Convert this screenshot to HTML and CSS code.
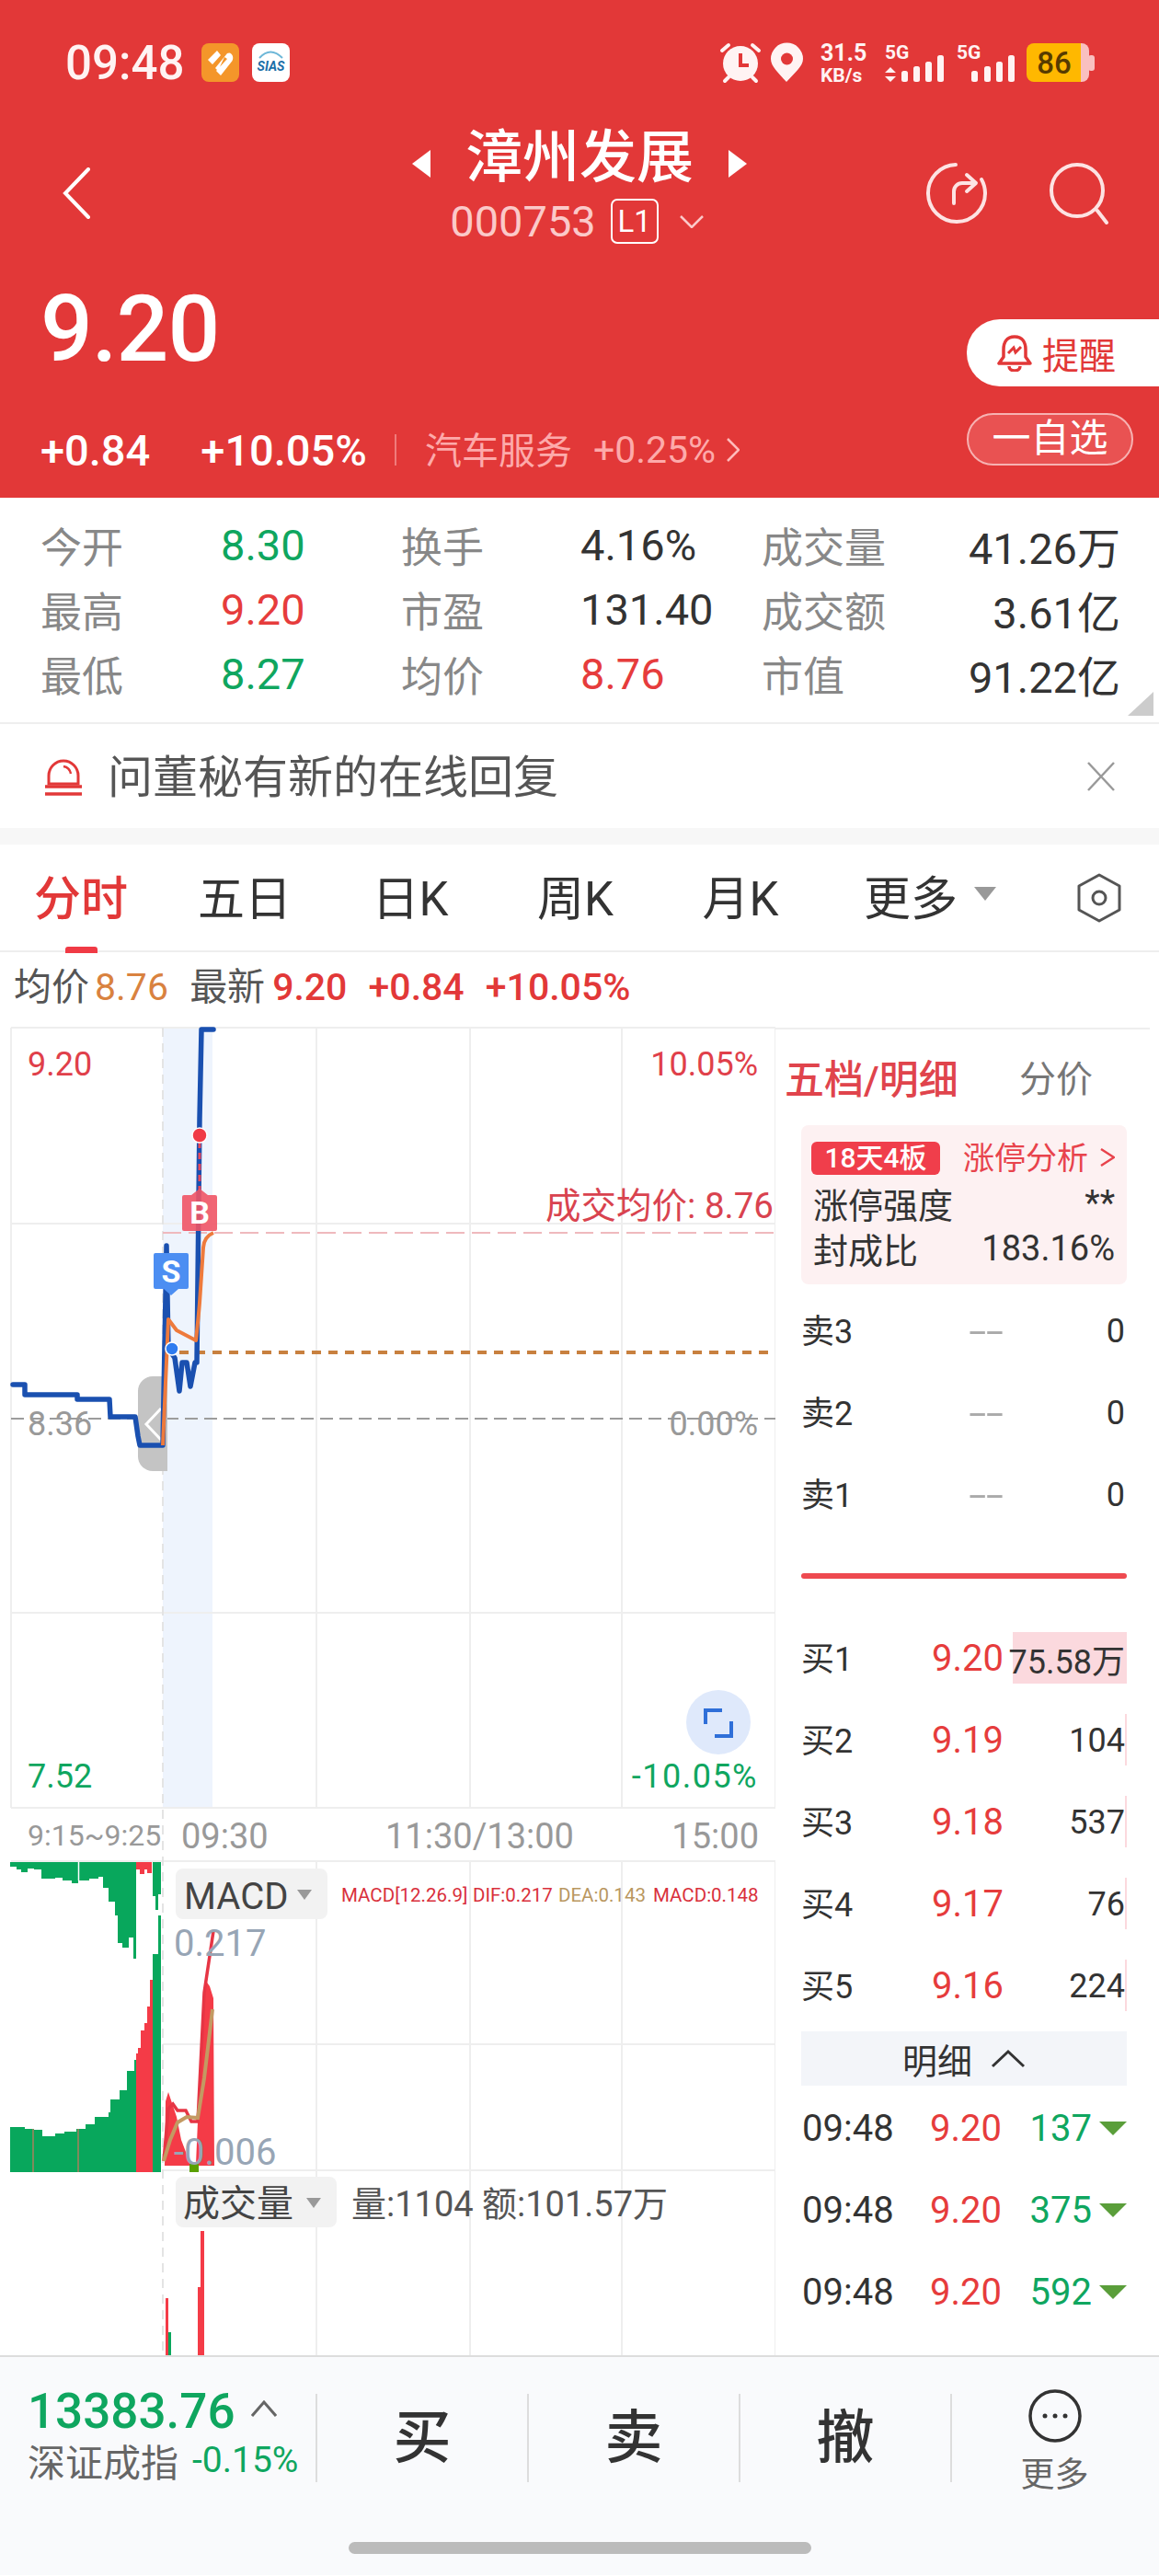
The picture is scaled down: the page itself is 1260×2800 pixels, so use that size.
FILE: index.html
```html
<!DOCTYPE html>
<html lang="zh-CN">
<head>
    <meta charset="UTF-8">
    <meta name="viewport" content="width=device-width, initial-scale=1.0">
    <title>漳州发展</title>
    <link rel="stylesheet" href="styles.css">
</head>
<body>
<div class="page">

    <!-- 红色头部 -->
    <header class="head">
        <div class="status-bar">
            <div class="status-left">
                <span class="clock">09:48</span>
                <svg class="app-tile" viewBox="0 0 41 42"><rect width="41" height="42" rx="8" fill="#f4962a"/><path d="M7 18 L17 8 L21 13 L12 23 Z M15 27 L28 11 Q32 9 34 14 Q35 18 32 21 L21 35 L16 30 L28 17 L25 15 L18 30 Z" fill="#fff"/></svg>
                <svg class="app-tile" viewBox="0 0 41 42"><rect width="41" height="42" rx="8" fill="#fff"/><path d="M8 16 Q20 3 33 16" fill="none" stroke="#6db7d8" stroke-width="2"/><text class="sias" x="20.5" y="30" text-anchor="middle">SIAS</text></svg>
            </div>
            <svg class="status-right" viewBox="783 47 407 43">
                <circle cx="805" cy="69" r="19" fill="#fff3f3"/>
                <path d="M805 58 V71 H814" fill="none" stroke="#e23838" stroke-width="4"/>
                <path d="M785 55 L792 49 M825 55 L818 49 M788 88 L792 84 M822 88 L818 84" stroke="#fff3f3" stroke-width="4" stroke-linecap="round"/>
                <path d="M855 89 C846 79 838 72 838 64 A17.5 17.5 0 0 1 873 64 C873 72 864 79 855 89 Z" fill="#fff3f3"/>
                <circle cx="855.500" cy="64" r="6.500" fill="#e23838"/>
                <text class="net-speed" x="892" y="66">31.5</text>
                <text class="net-unit" x="892" y="89">KB/s</text>
                <text class="net-type" x="962" y="64">5G</text>
                <text class="net-type" x="1040" y="64">5G</text>
                <path d="M968 73 L974 79 H962 Z M968 89 L974 83 H962 Z" fill="#fff3f3"/>
                <g fill="#fff3f3">
                    <rect x="980" y="77" width="7" height="12" rx="2.500"/>
                    <rect x="993" y="72" width="7" height="17" rx="2.500"/>
                    <rect x="1006" y="67" width="7" height="22" rx="2.500"/>
                    <rect x="1019" y="60" width="7" height="29" rx="2.500"/>
                    <rect x="1056" y="77" width="7" height="12" rx="2.500"/>
                    <rect x="1070" y="72" width="7" height="17" rx="2.500"/>
                    <rect x="1083" y="67" width="7" height="22" rx="2.500"/>
                    <rect x="1096" y="60" width="7" height="29" rx="2.500"/>
                </g>
                <rect x="1150" y="47" width="34" height="42" rx="8" fill="#f9c0c0"/>
                <rect x="1183" y="60" width="7" height="17" rx="3" fill="#f9c0c0"/>
                <path d="M1124 47 H1175 V89 H1124 A8 8 0 0 1 1116 81 V55 A8 8 0 0 1 1124 47 Z" fill="#ffb800"/>
                <text class="battery" x="1146" y="80" text-anchor="middle">86</text>
            </svg>
        </div>

        <div class="nav">
            <svg class="back-icon" viewBox="0 0 30 56"><path d="M28 2 L3 28 L28 54" fill="none" stroke="#fff" stroke-width="4" stroke-linecap="round"/></svg>
            <div class="nav-title">
                <div class="name-row">
                    <span class="arrow arrow-left"></span>
                    <span class="stock-name">漳州发展</span>
                    <span class="arrow arrow-right"></span>
                </div>
                <div class="code-row">
                    <span class="stock-code">000753</span>
                    <span class="level-tag">L1</span>
                    <svg class="code-caret" viewBox="0 0 26 14"><path d="M1 1 L13 13 L25 1" fill="none" stroke="#fbc9c9" stroke-width="2.500"/></svg>
                </div>
            </div>
            <div class="nav-actions">
                <svg class="nav-icon" viewBox="0 0 68 68"><path d="M32 3 A31 31 0 1 0 64 34" fill="none" stroke="#fde3e3" stroke-width="4" stroke-linecap="round"/><path d="M64 34 A31 31 0 0 0 60 19" fill="none" stroke="#fde3e3" stroke-width="4" stroke-linecap="round"/><path d="M30 45 V32 A9 9 0 0 1 39 23 H52 M44 14 L54 23 L44 32" fill="none" stroke="#fde3e3" stroke-width="4" stroke-linecap="round" stroke-linejoin="round"/></svg>
                <svg class="nav-icon" viewBox="0 0 68 68"><circle cx="31" cy="31" r="28" fill="none" stroke="#fde3e3" stroke-width="4"/><path d="M53 53 L63 66" stroke="#fde3e3" stroke-width="4" stroke-linecap="round"/></svg>
            </div>
        </div>

        <div class="price-row">
            <div class="price-left">
                <div class="last-price">9.20</div>
                <div class="change-row">
                    <span class="chg">+0.84</span>
                    <span class="chg chg-pct">+10.05%</span>
                    <span class="chg-sep"></span>
                    <span class="sector">汽车服务</span>
                    <span class="sector-chg">+0.25%</span>
                    <svg class="sector-arrow" viewBox="0 0 14 26"><path d="M1 1 L13 13 L1 25" fill="none" stroke="#fbb" stroke-width="2.500"/></svg>
                </div>
            </div>
            <div class="price-right">
                <div class="remind-btn">
                    <svg class="bell" viewBox="0 0 38 40"><path d="M19 2 C10 2 7 9 7 16 V24 L2 31 H36 L31 24 V16 C31 9 28 2 19 2 Z" fill="none" stroke="#e23838" stroke-width="3.500" stroke-linejoin="round"/><path d="M13 34 A6 5 0 0 0 25 34" fill="none" stroke="#e23838" stroke-width="3.500"/><path d="M12 20 L18 14 L20 19 L26 13" fill="none" stroke="#e23838" stroke-width="3"/></svg>
                    <span>提醒</span>
                </div>
                <div class="watch-btn">一自选</div>
            </div>
        </div>
    </header>

    <!-- 行情数据 -->
    <section class="stats">
        <span class="stat-label">今开</span><span class="stat-val green">8.30</span>
        <span class="stat-label">换手</span><span class="stat-val">4.16%</span>
        <span class="stat-label">成交量</span><span class="stat-val right">41.26万</span>
        <span class="stat-label">最高</span><span class="stat-val red">9.20</span>
        <span class="stat-label">市盈</span><span class="stat-val">131.40</span>
        <span class="stat-label">成交额</span><span class="stat-val right">3.61亿</span>
        <span class="stat-label">最低</span><span class="stat-val green">8.27</span>
        <span class="stat-label">均价</span><span class="stat-val red">8.76</span>
        <span class="stat-label">市值</span><span class="stat-val right">91.22亿</span>
        <span class="corner-mark"></span>
    </section>

    <section class="notice">
        <svg class="notice-icon" viewBox="0 0 42 44"><path d="M5 30 V21 A16 16 0 0 1 37 21 V30 Z" fill="none" stroke="#e23838" stroke-width="3"/><path d="M21 11 A10 10 0 0 1 29 19" fill="none" stroke="#e23838" stroke-width="2.500"/><path d="M1 33 H41 M1 41 H41" stroke="#e23838" stroke-width="3.500"/></svg>
        <span class="notice-text">问董秘有新的在线回复</span>
        <svg class="notice-close" viewBox="0 0 30 32"><path d="M1 1 L29 31 M29 1 L1 31" stroke="#999" stroke-width="2.500"/></svg>
    </section>

    <div class="band"></div>

    <nav class="tabs">
        <div class="tab-list">
            <span class="tab active">分时</span>
            <span class="tab">五日</span>
            <span class="tab">日K</span>
            <span class="tab">周K</span>
            <span class="tab">月K</span>
            <span class="tab tab-more">更多<i class="tab-caret"></i></span>
        </div>
        <svg class="hex-icon" viewBox="0 0 50 54"><path d="M25 2 L47 14 V40 L25 52 L3 40 V14 Z" fill="none" stroke="#555" stroke-width="3" stroke-linejoin="round"/><circle cx="25" cy="27" r="7" fill="none" stroke="#555" stroke-width="3"/></svg>
    </nav>

    <div class="quote-line">
        <span class="q-label">均价</span><span class="q-avg">8.76</span>
        <span class="q-label q-gap">最新</span><span class="q-red">9.20</span>
        <span class="q-red q-gap">+0.84</span>
        <span class="q-red q-gap">+10.05%</span>
    </div>

    <div class="trade">
        <!-- 分时图，坐标直接用整页坐标 -->
        <div class="chart">
            <svg class="chart-svg" viewBox="0 1100 843 1461">
                <rect x="177" y="1118" width="54" height="848" fill="#eef4fd"/>
                <g stroke="#eee" stroke-width="2" fill="none">
                    <path d="M12 1118 H843 M12 1331 H843 M12 1754 H843 M12 1966 H843"/>
                    <path d="M12 1118 V1966 M344 1118 V1966 M511 1118 V1966 M676 1118 V1966 M843 1118 V1966"/>
                    <path d="M12 2024 H843 M177 2223 H843 M177 2360 H843"/>
                    <path d="M344 2024 V2561 M511 2024 V2561 M676 2024 V2561 M843 2024 V2561"/>
                </g>
                <path d="M177 1118 V2561" stroke="#e4e4e4" stroke-width="2" stroke-dasharray="10 7"/>
                <path d="M12 1543 H843" stroke="#9c9c9c" stroke-width="2" stroke-dasharray="14 7"/>
                <path d="M177 1341 H843" stroke="#efb9bd" stroke-width="2" stroke-dasharray="20 8"/>
                <path d="M177 1471 H843" stroke="#c8803f" stroke-width="4" stroke-dasharray="10 8"/>

                <path class="handle" d="M182 1497 H166 A16 16 0 0 0 150 1513 V1584 A16 16 0 0 0 166 1600 H182 Z"/>
                <path d="M175 1532 L159 1549 L175 1566" fill="none" stroke="#fff" stroke-width="3"/>

                <path class="price-line" d="M14 1506 H27 V1517 H84 V1522 H119 L120 1541 H147 L150 1562 L152 1572 H177 L181 1355 L183 1467 L190 1477 L195 1513 L198 1482 H203 L207 1508 L212 1482 H214 L217 1217 L219 1120 H232"/>
                <path class="avg-line" d="M177 1572 L183 1435 L192 1447 L213 1458 Q216 1430 217 1417 L221 1357 Q222 1345 232 1341"/>
                <path d="M217 1242 V1295" stroke="#e8485a" stroke-width="3" stroke-dasharray="7 5"/>
                <circle cx="217" cy="1235" r="8" fill="#f03a45" stroke="#fff" stroke-width="1.500"/>
                <circle cx="187" cy="1467" r="7" fill="#2f7cf0" stroke="#fff" stroke-width="1.500"/>

                <path d="M198 1302 A2 2 0 0 1 200 1300 H208 L217 1293 L226 1300 H234 A2 2 0 0 1 236 1302 V1337 A2 2 0 0 1 234 1339 H200 A2 2 0 0 1 198 1337 Z" fill="#ef5465" fill-opacity=".9"/>
                <text class="mark" x="217" y="1331" text-anchor="middle">B</text>
                <path d="M167 1365 A2 2 0 0 1 169 1363 H203 A2 2 0 0 1 205 1365 V1400 A2 2 0 0 1 203 1402 H194 L186 1409 L178 1402 H169 A2 2 0 0 1 167 1400 Z" fill="#4c8ef2"/>
                <text class="mark" x="186" y="1395" text-anchor="middle">S</text>

                <circle cx="781" cy="1873" r="35" fill="#dfe9fb"/>
                <path d="M767 1875 V1860 H785 M795 1872 V1888 H777" fill="none" stroke="#2f6fd8" stroke-width="4"/>

                <text class="lbl red" x="30" y="1170">9.20</text>
                <text class="lbl red" x="824" y="1170" text-anchor="end">10.05%</text>
                <text class="lbl deal" x="841" y="1325" text-anchor="end">成交均价: 8.76</text>
                <text class="lbl gray" x="30" y="1561">8.36</text>
                <text class="lbl gray" x="824" y="1561" text-anchor="end">0.00%</text>
                <text class="lbl green" x="30" y="1944">7.52</text>
                <text class="lbl green wide" x="824" y="1944" text-anchor="end">-10.05%</text>

                <text class="axis-small" x="30" y="2007">9:15~9:25</text>
                <text class="lbl time" x="197" y="2010">09:30</text>
                <text class="lbl time" x="419" y="2010">11:30/13:00</text>
                <text class="lbl time" x="825" y="2010" text-anchor="end">15:00</text>

                <!-- MACD 柱 -->
                <path fill="#08a75c" d="M11 2025 V2030 H18 V2033 H23 V2036 H30 V2032 H37 V2033 H45 V2043 H60 V2042 H68 V2045 H78 V2048 H85 V2045 H97 V2043 H107 V2041 H112 V2053 H118 V2068 H125 V2083 H128 V2113 H133 V2118 H140 V2107 H145 V2130 H148 V2025 Z"/>
                <path fill="#08a75c" d="M166 2025 V2062 H169 V2077 H172 V2060 H175 V2025 Z"/>
                <path fill="#f43b47" d="M148 2025 V2033 H152 V2038 H157 V2033 H160 V2037 H165 V2025 Z"/>
                <path fill="#08a75c" d="M11 2362 V2313 H27 V2315 H35 V2316 H46 V2323 H60 V2320 H70 V2318 H83 V2315 H93 V2310 H103 V2302 H118 V2297 H120 V2283 H130 V2273 H138 V2252 H146 V2240 H148 V2362 Z"/>
                <path fill="#f43b47" d="M148 2362 V2233 H150 V2227 H153 V2208 H157 V2200 H160 V2182 H163 V2153 H166 V2362 Z"/>
                <path fill="#08a75c" d="M166 2362 V2125 H172 V2083 H175 V2362 Z"/>
                <path d="M36 2315 V2362 M85 2315 V2362" stroke="#7f8a5c" stroke-width="2"/>
                <path d="M85.500 2025 V2045" stroke="#fff" stroke-width="1.500"/>
                <path fill="#f43b47" d="M179 2355 L180 2285 L183 2275 L187 2287 L192 2302 L197 2327 L207 2353 H213 L215 2307 L220 2200 L223 2153 L228 2160 L232 2173 L233 2355 Z"/>
                <path d="M178 2350 L183 2293 L188 2288 L193 2295 L202 2295 L208 2307 L215 2307 L222 2167 L232 2100" fill="none" stroke="#e63544" stroke-width="3.500"/>
                <path d="M178 2350 L185 2327 L193 2308 L203 2302 L215 2303 L222 2260 L231 2185" fill="none" stroke="#c39a62" stroke-width="4"/>
                <rect x="206" y="2353" width="10" height="9" fill="#5aa000"/>

                <rect class="chip" x="191" y="2032" width="165" height="55" rx="8"/>
                <text class="chip-text" x="200" y="2076">MACD</text>
                <path class="chip-caret" d="M323 2055 H339 L331 2066 Z"/>
                <text class="axis-val" x="189" y="2127">0.217</text>
                <text class="axis-val" x="189" y="2354">-0.006</text>
                <text class="macd-t macd-red" x="371" y="2068">MACD[12.26.9]</text>
                <text class="macd-t macd-red" x="514" y="2068">DIF:0.217</text>
                <text class="macd-t macd-tan" x="607" y="2068">DEA:0.143</text>
                <text class="macd-t macd-red" x="710" y="2068">MACD:0.148</text>

                <rect class="chip" x="191" y="2367" width="175" height="55" rx="8"/>
                <text class="chip-text" x="199" y="2410">成交量</text>
                <path class="chip-caret" d="M333 2390 H349 L341 2401 Z"/>
                <text class="vol-text" x="382" y="2410">量:1104 额:101.57万</text>

                <!-- 成交量柱 -->
                <rect x="180" y="2499" width="3" height="62" fill="#f43b47"/>
                <rect x="183" y="2536" width="3" height="25" fill="#08a75c"/>
                <rect x="215" y="2487" width="3" height="74" fill="#f43b47"/>
                <rect x="218" y="2426" width="4" height="135" fill="#f43b47"/>
            </svg>
        </div>

        <!-- 五档 -->
        <aside class="book">
            <div class="book-tabs">
                <span class="book-tab-on">五档/明细</span>
                <span class="book-tab">分价</span>
            </div>
            <div class="limit-card">
                <div class="limit-head">
                    <span class="limit-badge">18天4板</span>
                    <span class="limit-link">涨停分析</span>
                    <svg class="limit-arrow" viewBox="0 0 16 22"><path d="M1 2 L15 11 L1 20" fill="none" stroke="#e8434c" stroke-width="2.500"/></svg>
                </div>
                <div class="limit-row"><span>涨停强度</span><span>**</span></div>
                <div class="limit-row"><span>封成比</span><span>183.16%</span></div>
            </div>

            <div class="sell-rows">
                <div class="level"><span class="lv-name">卖3</span><span class="lv-price"><b class="lv-none">--</b></span><span class="lv-vol">0</span></div>
                <div class="level"><span class="lv-name">卖2</span><span class="lv-price"><b class="lv-none">--</b></span><span class="lv-vol">0</span></div>
                <div class="level"><span class="lv-name">卖1</span><span class="lv-price"><b class="lv-none">--</b></span><span class="lv-vol">0</span></div>
            </div>
            <div class="book-line"></div>
            <div class="buy-rows">
                <div class="level"><span class="lv-name">买1</span><span class="lv-price red">9.20</span><span class="lv-vol">75.58万</span><i class="lv-bar" style="width:124px"></i></div>
                <div class="level"><span class="lv-name">买2</span><span class="lv-price red">9.19</span><span class="lv-vol">104</span><i class="lv-bar" style="width:2px"></i></div>
                <div class="level"><span class="lv-name">买3</span><span class="lv-price red">9.18</span><span class="lv-vol">537</span><i class="lv-bar" style="width:2px"></i></div>
                <div class="level"><span class="lv-name">买4</span><span class="lv-price red">9.17</span><span class="lv-vol">76</span><i class="lv-bar" style="width:2px"></i></div>
                <div class="level"><span class="lv-name">买5</span><span class="lv-price red">9.16</span><span class="lv-vol">224</span><i class="lv-bar" style="width:2px"></i></div>
            </div>
            <div class="detail-bar">
                <span>明细</span>
                <svg class="detail-caret" viewBox="0 0 38 22"><path d="M2 19 L19 3 L36 19" fill="none" stroke="#333" stroke-width="3"/></svg>
            </div>
            <div class="tick"><span>09:48</span><span class="tick-price red">9.20</span><span class="tick-vol green">137</span><i class="tick-down"></i></div>
            <div class="tick"><span>09:48</span><span class="tick-price red">9.20</span><span class="tick-vol green">375</span><i class="tick-down"></i></div>
            <div class="tick"><span>09:48</span><span class="tick-price red">9.20</span><span class="tick-vol green">592</span><i class="tick-down"></i></div>
        </aside>
    </div>

    <footer class="foot">
        <div class="foot-row">
            <div class="index-box">
                <div class="index-top">
                    <span class="index-num">13383.76</span>
                    <svg class="index-caret" viewBox="0 0 28 18"><path d="M1 17 L14 2 L27 17" fill="none" stroke="#666" stroke-width="3"/></svg>
                </div>
                <div class="index-sub"><span>深证成指</span><span class="index-pct">-0.15%</span></div>
            </div>
            <div class="trade-btn">买</div>
            <div class="trade-btn">卖</div>
            <div class="trade-btn">撤</div>
            <div class="more-btn">
                <svg class="more-icon" viewBox="0 0 58 58"><circle cx="29" cy="29" r="27" fill="none" stroke="#333" stroke-width="3.500"/><circle cx="18" cy="29" r="2.500" fill="#333"/><circle cx="29" cy="29" r="2.500" fill="#333"/><circle cx="40" cy="29" r="2.500" fill="#333"/></svg>
                <span>更多</span>
            </div>
        </div>
        <div class="home-bar"></div>
    </footer>
</div>
</body>
</html>
```

FILE: styles.css
```css
  * {
      box-sizing: border-box;
  }
  body {
      margin: 0;
      padding: 0;
      background-color: #fff;
      color: #333;
      font-family: Roboto, "Noto Sans CJK SC", sans-serif;
  }
  .page {
      width: 1260px;
      height: 2800px;
      overflow: hidden;
  }
  .red { color: #e63c3c; fill: #e63c3c; }
  .green { color: #0fa65f; fill: #0fa65f; }

  /* 头部 */
  .head {
      height: 541px;
      background-color: #e23838;
      color: #fff;
  }
  .status-bar {
      height: 136px;
      display: flex;
      justify-content: space-between;
      align-items: center;
      padding: 0 70px 0 71px;
  }
  .status-left {
      display: flex;
      align-items: center;
      gap: 14px;
  }
  .clock {
      font-size: 51px;
      font-weight: 500;
      color: #fff3f3;
      margin-right: 5px;
  }
  .app-tile {
      width: 41px;
      height: 42px;
  }
  .sias {
      font-size: 14px;
      font-weight: 700;
      font-style: italic;
      fill: #1b6ea8;
  }
  .status-right {
      width: 407px;
      height: 43px;
      overflow: visible;
  }
  .net-speed { font-size: 25px; font-weight: 700; fill: #fff3f3; }
  .net-unit { font-size: 21px; font-weight: 700; fill: #fff3f3; }
  .net-type { font-size: 21px; font-weight: 700; fill: #fff3f3; }
  .battery { font-size: 33px; font-weight: 500; fill: #573b00; }

  .nav {
      height: 136px;
      display: grid;
      grid-template-columns: 1fr auto 1fr;
      align-items: center;
      padding: 0 52px;
  }
  .back-icon {
      width: 30px;
      height: 56px;
      margin: 12px 0 0 16px;
  }
  .nav-title {
      display: flex;
      flex-direction: column;
      align-items: center;
  }
  .name-row {
      height: 72px;
      display: flex;
      align-items: center;
      gap: 38px;
  }
  .stock-name {
      font-size: 62px;
      font-weight: 500;
      line-height: 72px;
  }
  .arrow {
      width: 0;
      height: 0;
      margin-top: 12px;
      border-top: 15px solid transparent;
      border-bottom: 15px solid transparent;
  }
  .arrow-left { border-right: 20px solid #fff; }
  .arrow-right { border-left: 20px solid #fff; }
  .code-row {
      height: 64px;
      display: flex;
      align-items: center;
      margin-right: 6px;
  }
  .stock-code {
      font-size: 47px;
      color: #fbc9c9;
  }
  .level-tag {
      width: 52px;
      height: 49px;
      margin-left: 16px;
      border: 2px solid #fff;
      border-radius: 7px;
      font-size: 33px;
      line-height: 45px;
      text-align: center;
      color: #fff;
  }
  .code-caret {
      width: 26px;
      height: 14px;
      margin-left: 23px;
      margin-top: 2px;
  }
  .nav-actions {
      display: flex;
      justify-content: flex-end;
      gap: 65px;
      margin-top: 12px;
  }
  .nav-icon {
      width: 68px;
      height: 68px;
  }

  .price-row {
      height: 269px;
      display: flex;
      justify-content: space-between;
  }
  .price-left {
      padding: 48px 0 0 44px;
  }
  .last-price {
      height: 76px;
      font-size: 100px;
      font-weight: 500;
      line-height: 76px;
      letter-spacing: -1px;
  }
  .change-row {
      display: flex;
      align-items: center;
      height: 36px;
      margin-top: 75px;
  }
  .chg {
      font-size: 47px;
      font-weight: 500;
      margin-right: 55px;
  }
  .chg-pct {
      margin-right: 30px;
  }
  .chg-sep {
      width: 2px;
      height: 34px;
      background-color: #f07b7b;
      margin-right: 31px;
  }
  .sector {
      font-size: 40px;
      color: #fdaaaa;
      margin: -4px 23px 0 0;
  }
  .sector-chg {
      font-size: 41px;
      color: #fdaaaa;
      margin-right: 12px;
  }
  .sector-arrow {
      width: 14px;
      height: 26px;
  }
  .price-right {
      width: 209px;
      padding-top: 75px;
  }
  .remind-btn {
      height: 73px;
      display: flex;
      align-items: center;
      padding-left: 33px;
      background-color: #fff;
      border-radius: 36px 0 0 36px;
      color: #e23838;
      font-size: 40px;
  }
  .bell {
      width: 38px;
      height: 40px;
      margin-right: 11px;
  }
  .watch-btn {
      width: 181px;
      height: 57px;
      margin-top: 29px;
      background-color: #e95252;
      border: 2px solid #f7b2b2;
      border-radius: 29px;
      font-size: 42px;
      line-height: 51px;
      text-align: center;
  }

  /* 行情数据 */
  .stats {
      position: relative;
      height: 246px;
      display: grid;
      grid-template-columns: 196px 196px 195px 197px 150px 240px;
      grid-auto-rows: 70px;
      align-items: center;
      padding: 16px 0 0 44px;
      border-bottom: 2px solid #eee;
      font-size: 47px;
  }
  .stat-label {
      color: #888;
      font-size: 45px;
  }
  .stat-val {
      color: #333;
  }
  .stat-val.red { color: #e63c3c; }
  .stat-val.green { color: #0fa65f; }
  .stat-val.right {
      text-align: right;
  }
  .corner-mark {
      position: absolute;
      right: 6px;
      bottom: 7px;
      width: 0;
      height: 0;
      border-left: 28px solid transparent;
      border-bottom: 26px solid #ccc;
  }

  .notice {
      height: 113px;
      display: flex;
      align-items: center;
      padding: 0 48px;
  }
  .notice-icon {
      width: 42px;
      height: 44px;
      margin-right: 27px;
  }
  .notice-text {
      font-size: 49px;
      color: #555;
      margin-top: -6px;
  }
  .notice-close {
      width: 30px;
      height: 32px;
      margin-left: auto;
  }
  .band {
      height: 18px;
      background-color: #f7f7f7;
  }

  .tabs {
      height: 117px;
      display: flex;
      justify-content: space-between;
      align-items: center;
      padding-right: 40px;
      border-bottom: 2px solid #eee;
      font-size: 51px;
      color: #333;
  }
  .tab-list {
      display: grid;
      grid-template-columns: 176px 180px 180px 179px 180px 190px;
      margin-top: -5px;
  }
  .tab {
      position: relative;
      text-align: center;
      white-space: nowrap;
  }
  .tab.active {
      color: #e23838;
      font-weight: 500;
  }
  .tab.active::after {
      content: "";
      position: absolute;
      left: 71px;
      bottom: -26px;
      width: 35px;
      height: 7px;
      border-radius: 3px 3px 0 0;
      background-color: #f03a45;
  }
  .tab-caret {
      position: absolute;
      top: 28px;
      left: 164px;
      width: 0;
      height: 0;
      border-left: 12px solid transparent;
      border-right: 12px solid transparent;
      border-top: 15px solid #999;
  }
  .hex-icon {
      width: 50px;
      height: 54px;
  }

  .quote-line {
      height: 64px;
      padding: 6px 0 0 15px;
      font-size: 41px;
      line-height: 64px;
      white-space: nowrap;
  }
  .q-label { color: #555; }
  .q-avg { color: #d9823f; margin-left: 6px; }
  .q-gap { margin-left: 13px; }
  .q-red { color: #e23838; margin-left: 8px; font-weight: 500; }
  .q-red.q-gap { margin-left: 13px; }

  /* 分时图 + 五档 */
  .trade {
      height: 1461px;
      display: flex;
      overflow: hidden;
  }
  .chart {
      width: 843px;
      flex: none;
  }
  .chart-svg {
      display: block;
      width: 843px;
      height: 1461px;
      overflow: hidden;
  }
  .handle { fill: #c4c4c4; }
  .price-line {
      fill: none;
      stroke: #1a50b0;
      stroke-width: 5.5;
      stroke-linejoin: round;
      stroke-linecap: round;
  }
  .avg-line {
      fill: none;
      stroke: #ee7a3c;
      stroke-width: 4;
      stroke-linejoin: round;
  }
  .mark {
      font-size: 34px;
      font-weight: 700;
      fill: #fff;
  }
  .lbl { font-size: 36px; }
  .lbl.red { fill: #e0404a; }
  .lbl.green { fill: #0fa65f; }
  .lbl.gray { fill: #999; }
  .lbl.deal { fill: #d9434f; font-size: 38.5px; }
  .lbl.wide { letter-spacing: 1.5px; }
  .lbl.time { fill: #999; font-size: 38px; }
  .axis-small { font-size: 32px; fill: #999; }
  .axis-val { font-size: 40px; fill: #97a5b5; }
  .chip { fill: #f2f2f2; }
  .chip-text { font-size: 40px; fill: #444; }
  .chip-caret { fill: #999; }
  .macd-t { font-size: 20.5px; }
  .macd-red { fill: #d9303c; }
  .macd-tan { fill: #b9975f; }
  .vol-text { font-size: 38px; fill: #555; }

  .book {
      flex: 1;
      margin: 18px 11px 0 0;
      padding: 0 25px 0 28px;
      border-top: 2px solid #eee;
      font-size: 38px;
      color: #333;
  }
  .book-tabs {
      height: 104px;
      display: flex;
      align-items: center;
      margin-left: -18px;
      padding-bottom: 2px;
      font-size: 43px;
  }
  .book-tab-on {
      color: #e0444c;
      font-weight: 500;
      width: 255px;
  }
  .book-tab {
      color: #777;
      font-size: 40px;
  }
  .limit-card {
      height: 173px;
      padding: 18px 13px 0 13px;
      background-color: #fdf1f2;
      border-radius: 8px;
  }
  .limit-head {
      height: 36px;
      display: flex;
      align-items: center;
      margin-bottom: 6px;
  }
  .limit-badge {
      flex: none;
      width: 140px;
      height: 36px;
      margin-left: -2px;
      background-color: #f03e4b;
      border-radius: 6px;
      font-size: 30px;
      line-height: 36px;
      text-align: center;
      color: #fff;
      font-weight: 500;
      white-space: nowrap;
  }
  .limit-link {
      flex: none;
      margin: -5px 0 0 25px;
      font-size: 34px;
      color: #e8434c;
      white-space: nowrap;
  }
  .limit-arrow {
      flex: none;
      width: 16px;
      height: 22px;
      margin: -3px 0 0 13px;
  }
  .limit-row {
      height: 49px;
      display: flex;
      justify-content: space-between;
      align-items: center;
      font-size: 38px;
  }
  .sell-rows {
      margin-top: 6px;
  }
  .level {
      position: relative;
      height: 89px;
      display: grid;
      grid-template-columns: 90px 130px 1fr;
      align-items: center;
      font-size: 36px;
  }
  .level > span {
      position: relative;
      z-index: 1;
  }
  .level > .lv-name {
      top: -3px;
  }
  .lv-price {
      text-align: right;
      font-size: 40px;
  }
  .lv-none {
      display: inline-block;
      font-weight: 400;
      font-size: 38px;
      color: #aaa;
      transform: scaleX(1.8);
      transform-origin: right center;
  }
  .lv-vol {
      text-align: right;
      padding-right: 2px;
      white-space: nowrap;
  }
  .lv-bar {
      position: absolute;
      top: 16px;
      right: 0;
      height: 56px;
      background-color: #fbd9de;
  }
  .book-line {
      height: 6px;
      margin-top: 41px;
      margin-bottom: 42px;
      background-color: #ee4a50;
      border-radius: 3px;
  }
  .detail-bar {
      height: 59px;
      margin-top: 5px;
      display: flex;
      justify-content: center;
      align-items: center;
      gap: 20px;
      background-color: #f3f5f9;
      font-size: 38px;
  }
  .detail-caret {
      width: 38px;
      height: 22px;
  }
  .tick {
      height: 89px;
      display: grid;
      grid-template-columns: 100px 117px 98px 1fr;
      align-items: center;
      font-size: 40px;
      padding: 3px 0 0 1px;
  }
  .tick-price,
  .tick-vol {
      text-align: right;
  }
  .tick-down {
      justify-self: end;
      width: 0;
      height: 0;
      border-left: 15px solid transparent;
      border-right: 15px solid transparent;
      border-top: 15px solid #5a9e3a;
  }

  /* 底部 */
  .foot {
      height: 239px;
      background-color: #f9fafc;
      border-top: 2px solid #ddd;
      padding-top: 40px;
  }
  .foot-row {
      height: 96px;
      display: flex;
  }
  .index-box {
      width: 343px;
      flex: none;
      margin-top: -7px;
      padding-left: 30px;
  }
  .index-top {
      height: 52px;
      display: flex;
      align-items: center;
  }
  .index-num {
      font-size: 53px;
      line-height: 52px;
      font-weight: 500;
      color: #0fa65f;
  }
  .index-caret {
      width: 28px;
      height: 18px;
      margin: -6px 0 0 17px;
  }
  .index-sub {
      height: 54px;
      display: flex;
      align-items: center;
      font-size: 41px;
      color: #666;
      white-space: nowrap;
  }
  .index-pct {
      margin-left: 15px;
      font-size: 39px;
      color: #0fa65f;
  }
  .trade-btn {
      width: 230px;
      flex: none;
      border-left: 2px solid #ddd;
      font-size: 63px;
      line-height: 96px;
      font-weight: 500;
      text-align: center;
      color: #333;
  }
  .more-btn {
      flex: 1;
      margin-top: -5px;
      display: flex;
      flex-direction: column;
      align-items: center;
      font-size: 37px;
      color: #666;
      position: relative;
  }
  .more-btn::before {
      content: "";
      position: absolute;
      left: 0;
      top: 5px;
      width: 2px;
      height: 96px;
      background-color: #ddd;
  }
  .more-icon {
      flex: none;
      width: 58px;
      height: 58px;
      margin-bottom: 5px;
  }
  .home-bar {
      width: 503px;
      height: 13px;
      margin: 65px auto 0;
      border-radius: 7px;
      background-color: #bbb;
  }
```
